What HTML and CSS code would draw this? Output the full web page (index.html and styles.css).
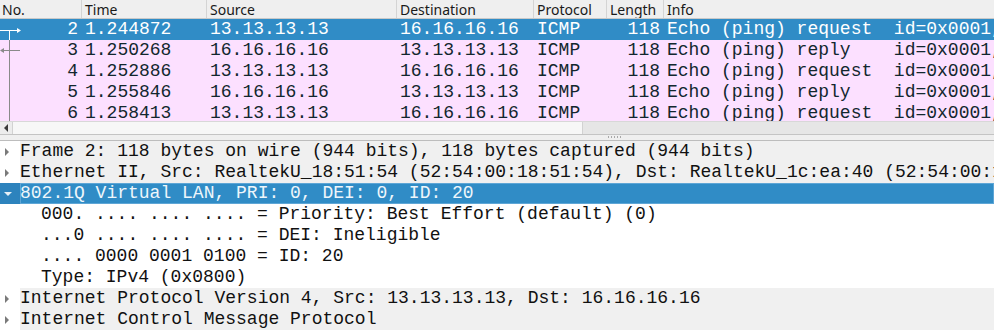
FILE: index.html
```html
<!DOCTYPE html>
<html lang="en">
  <head>
    <meta charset="UTF-8" />
    <title>packet list</title>
    <link rel="stylesheet" href="styles.css">
  </head>
  <body>
    <div class="list">
      <div class="hdr">
        <div>No.</div>
        <div>Time</div>
        <div>Source</div>
        <div>Destination</div>
        <div>Protocol</div>
        <div>Length</div>
        <div>Info</div>
      </div>
      <div class="rows">
        <div class="row sel">
          <div class="r">2</div><div>1.244872</div><div>13.13.13.13</div><div>16.16.16.16</div><div>ICMP</div><div class="r">118</div><div>Echo (ping) request  id=0x0001, seq=1/256, ttl=64 (reply in 3)</div>
        </div>
        <div class="row">
          <div class="r">3</div><div>1.250268</div><div>16.16.16.16</div><div>13.13.13.13</div><div>ICMP</div><div class="r">118</div><div>Echo (ping) reply    id=0x0001, seq=1/256, ttl=64 (request in 2)</div>
        </div>
        <div class="row">
          <div class="r">4</div><div>1.252886</div><div>13.13.13.13</div><div>16.16.16.16</div><div>ICMP</div><div class="r">118</div><div>Echo (ping) request  id=0x0001, seq=2/512, ttl=64 (reply in 5)</div>
        </div>
        <div class="row">
          <div class="r">5</div><div>1.255846</div><div>16.16.16.16</div><div>13.13.13.13</div><div>ICMP</div><div class="r">118</div><div>Echo (ping) reply    id=0x0001, seq=2/512, ttl=64 (request in 4)</div>
        </div>
        <div class="row">
          <div class="r">6</div><div>1.258413</div><div>13.13.13.13</div><div>16.16.16.16</div><div>ICMP</div><div class="r">118</div><div>Echo (ping) request  id=0x0001, seq=3/768, ttl=64 (reply in 7)</div>
        </div>
        <svg class="related" width="24" height="102" viewBox="0 0 24 102">
          <path d="M0 11.5H18M9.5 11.5V21" stroke="#fff" stroke-width="1" fill="none"/>
          <path d="M17 9L21 11.5L17 14Z" fill="#fff"/>
          <path d="M9.5 21V102M3 31.5H20" stroke="#8a8a8a" stroke-width="1" fill="none"/>
          <path d="M0 31.5L4 29V34Z" fill="#8a8a8a"/>
        </svg>
      </div>
      <div class="hscroll">
        <div class="btn"><span class="larrow"></span></div>
        <div class="thumb"></div>
        <div class="track"></div>
      </div>
    </div>
    <div class="splitter"><span class="grip"></span></div>
    <div class="tree">
      <div class="node top"><span class="tw closed"></span><span class="txt">Frame 2: 118 bytes on wire (944 bits), 118 bytes captured (944 bits)</span></div>
      <div class="node top"><span class="tw closed"></span><span class="txt">Ethernet II, Src: RealtekU_18:51:54 (52:54:00:18:51:54), Dst: RealtekU_1c:ea:40 (52:54:00:1c:ea:40)</span></div>
      <div class="node top sel"><span class="tw open"></span><span class="txt">802.1Q Virtual LAN, PRI: 0, DEI: 0, ID: 20</span></div>
      <div class="node child"><span class="txt">000. .... .... .... = Priority: Best Effort (default) (0)</span></div>
      <div class="node child"><span class="txt">...0 .... .... .... = DEI: Ineligible</span></div>
      <div class="node child"><span class="txt">.... 0000 0001 0100 = ID: 20</span></div>
      <div class="node child"><span class="txt">Type: IPv4 (0x0800)</span></div>
      <div class="node top"><span class="tw closed"></span><span class="txt">Internet Protocol Version 4, Src: 13.13.13.13, Dst: 16.16.16.16</span></div>
      <div class="node top"><span class="tw closed"></span><span class="txt">Internet Control Message Protocol</span></div>
    </div>
  </body>
</html>
```

FILE: styles.css
```css
* { box-sizing: border-box; }
html, body { width: 994px; height: 332px; margin: 0; overflow: hidden; background: #fff; }

.list { display: flex; flex-direction: column; }
.hdr { display: grid; grid-template-columns: 82px 125px 190px 137px 73px 57px 1fr; height: 19px; background: #efefef; border-bottom: 1px solid #c9c9c9; font: 14px "Noto Sans", sans-serif; color: #1a1a1a; }
.hdr div { padding-left: 2px; line-height: 19px; border-right: 1px solid #d4d4d4; white-space: nowrap; overflow: hidden; }
.hdr div + div { padding-left: 3px; }
.hdr div:last-child { border-right: none; }

.rows { position: relative; height: 102px; overflow: hidden; }
.row { display: grid; grid-template-columns: 82px 125px 190px 137px 73px 57px 1fr; height: 21px; background: #fce0ff; color: #12272e; font: 18px "Liberation Mono", monospace; line-height: 21px; }
.row div { padding: 0 4px 0 3px; white-space: pre; overflow: hidden; }
.row .r { text-align: right; }
.row.sel { background: #308cc6; color: #fff; }
.related { position: absolute; left: 0; top: 0; }

.hscroll { display: flex; height: 14px; background: #ececec; border-top: 1px solid #d8d8d8; border-bottom: 1px solid #c4c4c4; }
.hscroll .btn { display: flex; align-items: center; justify-content: center; width: 12px; }
.larrow { width: 0; height: 0; border-top: 4px solid transparent; border-bottom: 4px solid transparent; border-right: 4px solid #3a3a3a; }
.hscroll .thumb { width: 571px; background: #f7f7f7; border: 1px solid #d2d2d2; border-top: none; border-bottom: none; }
.hscroll .track { flex: 1; background: #e6e6e6; }

.splitter { display: flex; justify-content: center; height: 6px; background: #efefef; border-bottom: 1px solid #bdbdbd; padding-left: 235px; }
.grip { width: 16px; margin-top: 1px; height: 2px; background: radial-gradient(circle, #a8a8a8 0.6px, transparent 0.8px) 0 0 / 3px 2px; }

.tree { font: 18px "Liberation Mono", monospace; color: #111; }
.node { display: flex; align-items: center; height: 21px; white-space: pre; overflow: hidden; }
.node .txt { flex: 1; height: 21px; line-height: 21px; }
.node.top .txt { background: #f0f0f0; }
.node.child { padding-left: 41px; }
.tw { display: flex; align-items: center; justify-content: center; width: 20px; height: 21px; flex: none; }
.tw.closed::before { content: ""; border-top: 4px solid transparent; border-bottom: 4px solid transparent; border-left: 4px solid #7a7a7a; margin-left: -6px; }
.tw.open::before { content: ""; border-left: 4px solid transparent; border-right: 4px solid transparent; border-top: 4px solid #e6f0f7; margin-left: -4px; }
.node.sel { background: #2d83bd; color: #fff; }
.node.sel .txt { background: #308cc6; box-shadow: inset 0 0 0 1px #5ea6d6; color: #eef6fb; }
```
